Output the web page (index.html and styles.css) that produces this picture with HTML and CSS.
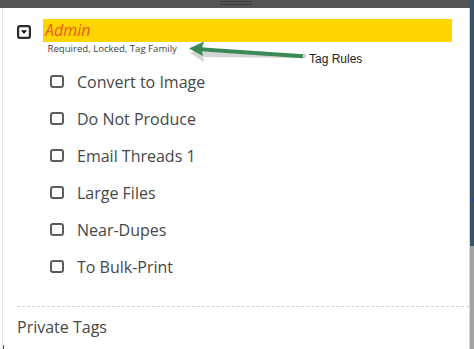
FILE: index.html
```html
<!DOCTYPE html>
<html>
<head>
<meta charset="utf-8">
<link rel="stylesheet" href="styles.css">
</head>
<body>
<div class="frame">
  <div class="topbar"><span class="handle"></span></div>
  <div class="main">
    <div class="panel">
      <div class="family">
        <span class="toggle">
          <svg width="14" height="14" viewBox="0 0 14 14"><rect x="1.1" y="1.1" width="11.8" height="11.8" rx="2" fill="#fff" stroke="#2b2b2b" stroke-width="2.2"/><path d="M4 5.2 H10 L7 9 Z" fill="#111"/></svg>
        </span>
        <div class="family-body">
          <div class="family-name">Admin</div>
          <div class="family-rules">Required, Locked, Tag Family</div>
        </div>
      </div>
      <ul class="tags">
        <li class="tag"><span class="box"></span><span>Convert to Image</span></li>
        <li class="tag"><span class="box"></span><span>Do Not Produce</span></li>
        <li class="tag"><span class="box"></span><span>Email Threads 1</span></li>
        <li class="tag"><span class="box"></span><span>Large Files</span></li>
        <li class="tag"><span class="box"></span><span>Near-Dupes</span></li>
        <li class="tag"><span class="box"></span><span>To Bulk-Print</span></li>
      </ul>
      <div class="divider"></div>
      <div class="section">Private Tags</div>
      <svg class="arrow" width="130" height="24" viewBox="0 0 130 24">
        <path d="M2 11 L17 4 L15 10 L118 12 L118 16 L15 15 L16 20 Z" fill="#a0a0a0" fill-opacity="0.45" transform="translate(1,3)"/>
        <path d="M13 8.2 L116 15.2 L115.7 19.2 L12.7 12.2 Z" fill="#3b8a55"/>
        <path d="M2 9.5 L17 2.5 L14.5 10 L16 17 Z" fill="#3b8a55"/>
      </svg>
      <div class="note">Tag Rules</div>
    </div>
    <div class="edge"></div>
  </div>
  <span class="tick"></span>
</div>
</body>
</html>
```
FILE: styles.css
```css
* { box-sizing: border-box; }
html, body { margin: 0; padding: 0; background: #fff; }
body { width: 474px; height: 349px; overflow: hidden; font-family: "Open Sans", "Liberation Sans", sans-serif; }
.frame { position: relative; width: 474px; height: 349px; display: flex; flex-direction: column; }
.topbar { height: 8px; background: linear-gradient(to right, #545454 0, #545454 470px, #3c5263 470px); display: flex; justify-content: center; flex-shrink: 0; }
.handle { width: 32px; height: 4px; margin-top: 1px; margin-left: -2px; border-top: 1px solid #3a3a3a; border-bottom: 1px solid #3a3a3a; }
.main { flex: 1; display: flex; }
.panel { position: relative; flex: 1; border-left: 1px solid #e6e6e6; margin-left: 2px; padding-top: 11px; }
.edge { width: 5px; border-left: 1px solid #d8d8d8; background: linear-gradient(to bottom, #3c5263 0, #3c5263 190px, #2f4c7a 190px, #2f4c7a 194px, #3c5263 194px, #3c5263 238px, #a3a3a3 238px); }
.family { display: flex; padding-left: 14px; }
.toggle { width: 14px; height: 14px; margin-top: 6px; margin-right: 12px; display: block; }
.toggle svg { display: block; }
.family-body { flex: none; width: 409px; }
.family-name { height: 23px; line-height: 23px; background: #ffd600; color: #ee5a24; font-style: italic; font-size: 16px; padding-left: 2px; }
.family-rules { font-size: 9.6px; line-height: 14px; color: #444; padding-left: 4.5px; }
.tags { list-style: none; margin: 7px 0 0 0; padding: 0 0 0 47px; }
.tag { display: flex; align-items: center; height: 37px; font-size: 16px; color: #474747; }
.box { width: 14px; height: 13px; border: 2px solid #5c5c5c; border-radius: 3px; margin-right: 13px; flex: none; }
.divider { margin: 21px 0 0 14px; border-top: 1px dashed #d4d4d4; }
.section { margin: 9px 0 0 14px; font-size: 16px; line-height: 22px; color: #474747; }
.arrow { position: absolute; left: 184px; top: 31px; }
.note { position: absolute; left: 306px; top: 44px; font-family: "Liberation Sans", Arial, sans-serif; font-size: 12px; color: #222; }
.tick { position: absolute; left: 3px; top: 345px; width: 1px; height: 4px; background: #555; }
```
